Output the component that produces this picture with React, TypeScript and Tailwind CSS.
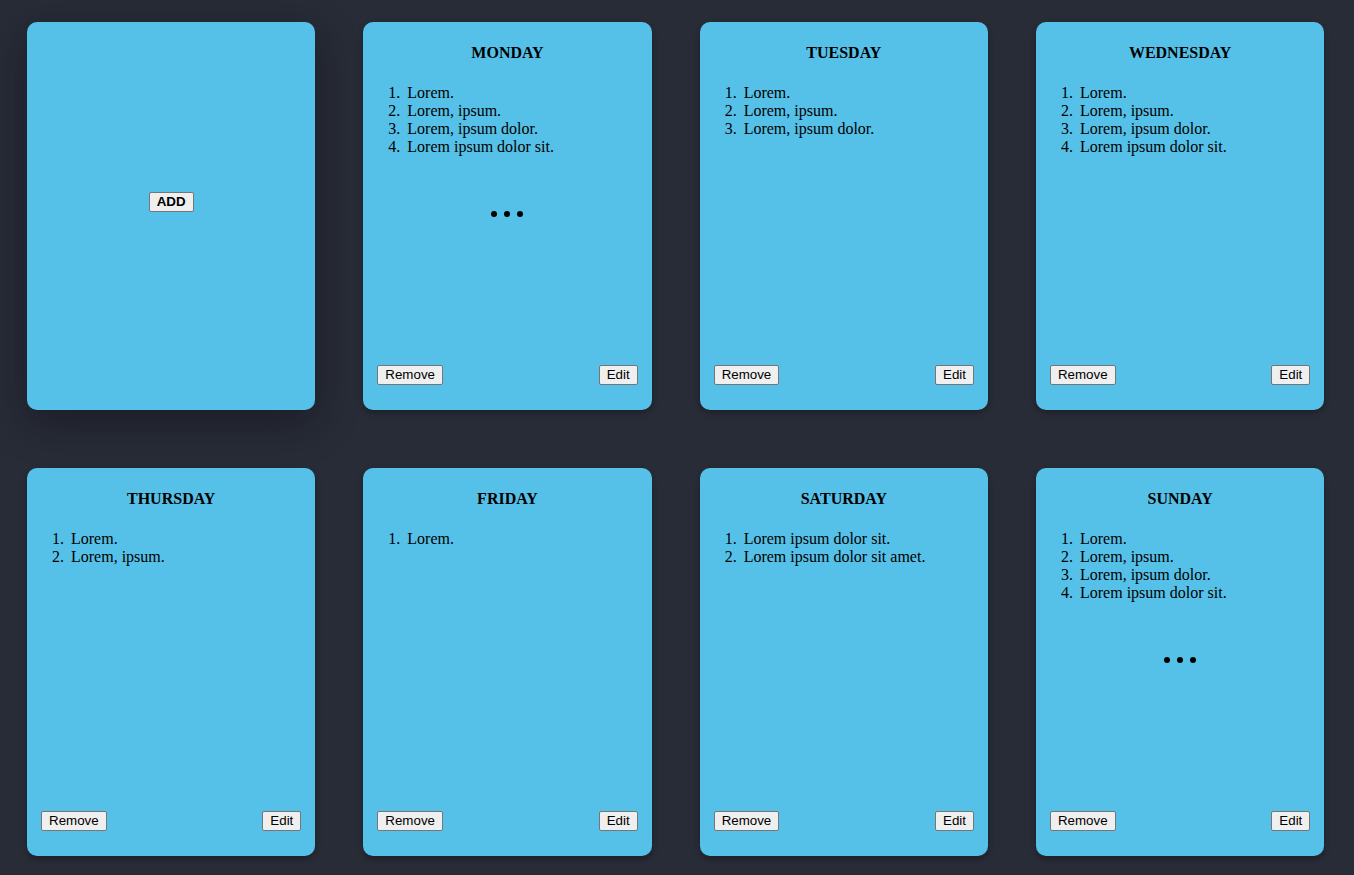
import React from "react";

type Day = {
  name: string;
  items: string[];
  more?: boolean;
};

const DAYS: Day[] = [
  { name: "MONDAY", items: ["Lorem.", "Lorem, ipsum.", "Lorem, ipsum dolor.", "Lorem ipsum dolor sit."], more: true },
  { name: "TUESDAY", items: ["Lorem.", "Lorem, ipsum.", "Lorem, ipsum dolor."] },
  { name: "WEDNESDAY", items: ["Lorem.", "Lorem, ipsum.", "Lorem, ipsum dolor.", "Lorem ipsum dolor sit."] },
  { name: "THURSDAY", items: ["Lorem.", "Lorem, ipsum."] },
  { name: "FRIDAY", items: ["Lorem."] },
  { name: "SATURDAY", items: ["Lorem ipsum dolor sit.", "Lorem ipsum dolor sit amet."] },
  { name: "SUNDAY", items: ["Lorem.", "Lorem, ipsum.", "Lorem, ipsum dolor.", "Lorem ipsum dolor sit."], more: true },
];

const btn =
  "rounded-[2px] border border-[#767676] bg-[#efefef] px-[7px] py-[1px] text-[13.33px] leading-[16px] text-black font-['Liberation_Sans',Arial,sans-serif]";

export default function App() {
  return (
    <div className="min-h-screen bg-[#282c37] font-['Liberation_Serif','Times_New_Roman',serif] text-black">
      <div className="grid grid-cols-[repeat(4,288.33px)] gap-x-[48px] gap-y-[58px] pl-[27px] pt-[22px] pb-[20px]">
        <div className="flex h-[388px] flex-col items-center rounded-[10px] bg-[#56c1e8] shadow-[0_12px_40px_rgba(10,12,20,0.45)]">
          <button className={`${btn} mt-[170px] font-bold`}>ADD</button>
        </div>
        {DAYS.map((day) => (
          <DayCard key={day.name} day={day} />
        ))}
      </div>
    </div>
  );
}

function DayCard({ day }: { day: Day }) {
  return (
    <div className="flex h-[388px] flex-col rounded-[10px] bg-[#56c1e8] shadow-[0_3px_6px_rgba(0,0,0,0.3)]">
      <h4 className="mt-[22px] text-center text-[16px] font-bold leading-[18px]">{day.name}</h4>
      <ol className="mt-[22px] list-decimal pl-[41px] text-[16px] leading-[18px]">
        {day.items.map((item, i) => (
          <li key={i} className="pl-[3px]">{item}</li>
        ))}
      </ol>
      {day.more && (
        <div className="mt-[55px] flex justify-center gap-[7px]">
          <span className="h-[6px] w-[6px] rounded-full bg-black" />
          <span className="h-[6px] w-[6px] rounded-full bg-black" />
          <span className="h-[6px] w-[6px] rounded-full bg-black" />
        </div>
      )}
      <div className="mt-auto mb-[25px] flex items-center justify-between px-[14px]">
        <button className={btn}>Remove</button>
        <button className={btn}>Edit</button>
      </div>
    </div>
  );
}
